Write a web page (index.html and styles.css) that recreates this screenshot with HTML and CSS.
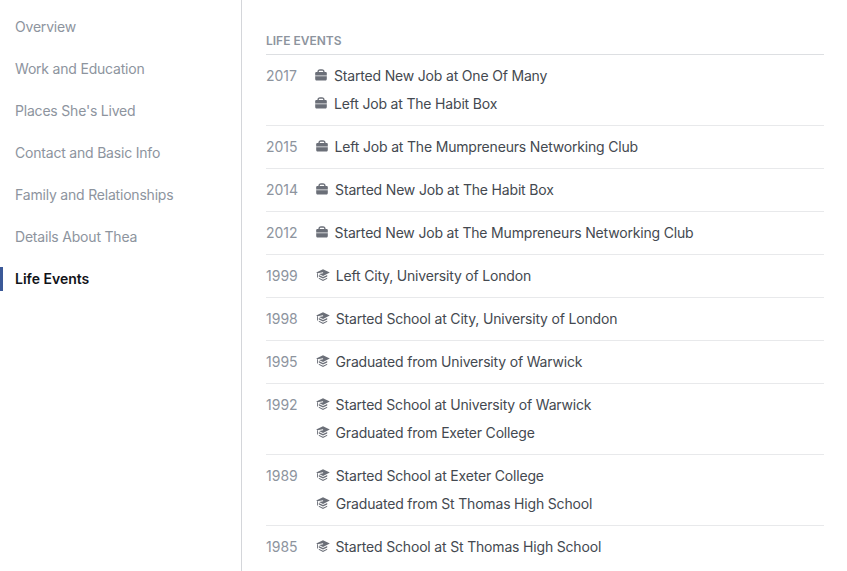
FILE: index.html
```html
<!DOCTYPE html>
<html lang="en">
<head>
<meta charset="utf-8">
<title>Life Events</title>
<link rel="stylesheet" href="styles.css">
</head>
<body>
<svg class="defs" width="0" height="0" aria-hidden="true">
  <symbol id="job" viewBox="0 0 12 12">
    <path d="M2.400 3.500V2.800C2.400 1.200 3.400.3 5 .3h2c1.600 0 2.600.9 2.600 2.500v.7H8.200v-.8c0-.5-.3-.9-1-.9H4.800c-.7 0-1 .4-1 .9v.8z"/>
    <path d="M1.500 3h9c.8 0 1.300.5 1.300 1.300v2H.2v-2C.2 3.500.7 3 1.500 3z"/>
    <path fill-opacity=".55" d="M.2 6.300h11.600v.9H.2z"/>
    <path d="M.2 7.200h11.600v2.900c0 .9-.5 1.500-1.300 1.500h-9c-.8 0-1.300-.6-1.300-1.500z"/>
  </symbol>
  <symbol id="school" viewBox="0 0 14 12">
    <path d="M7 .3 13.800 3.600 7 6.900 3 5 7.200 4.300 7 3.300 1.500 4.200.2 3.600z"/>
    <path d="M2.800 6 7 8.100 11.200 6v1.500L7 9.600 2.800 7.500z"/>
    <path d="M2.800 8.700 7 10.800l4.200-2.100v1.100L7 11.900 2.800 9.800z"/>
    <path d="M1 4.300h.9v4.200H1z"/>
  </symbol>
</svg>
<div class="page">
  <nav class="sidebar">
    <a class="nav-item">Overview</a>
    <a class="nav-item">Work and Education</a>
    <a class="nav-item">Places She's Lived</a>
    <a class="nav-item">Contact and Basic Info</a>
    <a class="nav-item">Family and Relationships</a>
    <a class="nav-item">Details About Thea</a>
    <a class="nav-item active">Life Events</a>
  </nav>
  <main class="content">
    <h2 class="heading">LIFE EVENTS</h2>
    <section class="year-row">
      <div class="year">2017</div>
      <ul class="events">
        <li class="event"><svg class="icon job"><use href="#job"/></svg>Started New Job at One Of Many</li>
        <li class="event"><svg class="icon job"><use href="#job"/></svg>Left Job at The Habit Box</li>
      </ul>
    </section>
    <section class="year-row">
      <div class="year">2015</div>
      <ul class="events">
        <li class="event"><svg class="icon job"><use href="#job"/></svg>Left Job at The Mumpreneurs Networking Club</li>
      </ul>
    </section>
    <section class="year-row">
      <div class="year">2014</div>
      <ul class="events">
        <li class="event"><svg class="icon job"><use href="#job"/></svg>Started New Job at The Habit Box</li>
      </ul>
    </section>
    <section class="year-row">
      <div class="year">2012</div>
      <ul class="events">
        <li class="event"><svg class="icon job"><use href="#job"/></svg>Started New Job at The Mumpreneurs Networking Club</li>
      </ul>
    </section>
    <section class="year-row">
      <div class="year">1999</div>
      <ul class="events">
        <li class="event"><svg class="icon school"><use href="#school"/></svg>Left City, University of London</li>
      </ul>
    </section>
    <section class="year-row">
      <div class="year">1998</div>
      <ul class="events">
        <li class="event"><svg class="icon school"><use href="#school"/></svg>Started School at City, University of London</li>
      </ul>
    </section>
    <section class="year-row">
      <div class="year">1995</div>
      <ul class="events">
        <li class="event"><svg class="icon school"><use href="#school"/></svg>Graduated from University of Warwick</li>
      </ul>
    </section>
    <section class="year-row">
      <div class="year">1992</div>
      <ul class="events">
        <li class="event"><svg class="icon school"><use href="#school"/></svg>Started School at University of Warwick</li>
        <li class="event"><svg class="icon school"><use href="#school"/></svg>Graduated from Exeter College</li>
      </ul>
    </section>
    <section class="year-row">
      <div class="year">1989</div>
      <ul class="events">
        <li class="event"><svg class="icon school"><use href="#school"/></svg>Started School at Exeter College</li>
        <li class="event"><svg class="icon school"><use href="#school"/></svg>Graduated from St Thomas High School</li>
      </ul>
    </section>
    <section class="year-row last">
      <div class="year">1985</div>
      <ul class="events">
        <li class="event"><svg class="icon school"><use href="#school"/></svg>Started School at St Thomas High School</li>
      </ul>
    </section>
  </main>
</div>
</body>
</html>
```
FILE: styles.css
```css
html, body {
  margin: 0;
  height: 100%;
  overflow: hidden;
  background: #fff;
}

body {
  font-family: Inter, "Liberation Sans", sans-serif;
  font-size: 14px;
  color: #444950;
}

.defs {
  display: block;
  height: 0;
}

.page {
  display: flex;
  height: 571px;
}

.sidebar {
  width: 241px;
  flex: none;
  border-right: 1px solid #d4d6da;
  padding-top: 15px;
  display: flex;
  flex-direction: column;
  gap: 18px;
}

.nav-item {
  display: block;
  height: 24px;
  line-height: 24px;
  padding-left: 15px;
  color: #8d949e;
  letter-spacing: -0.2px;
}

.nav-item.active {
  color: #111318;
  font-weight: 600;
  letter-spacing: 0;
  box-shadow: inset 3px 0 0 #3b5998;
}

.content {
  width: 558px;
  flex: none;
  margin-left: 24px;
  padding-top: 32px;
}

.heading {
  margin: 0;
  height: 22px;
  line-height: 18px;
  font-size: 12px;
  font-weight: 600;
  color: #8d949e;
  border-bottom: 1px solid #dddfe2;
}

.year-row {
  display: flex;
  gap: 18px;
  padding: 7px 0;
  border-bottom: 1px solid #e8e9eb;
}

.year-row.last {
  border-bottom: 0;
}

.year {
  line-height: 28px;
  color: #8d949e;
}

.events {
  margin: 0;
  padding: 0;
  list-style: none;
}

.event {
  display: flex;
  align-items: center;
  height: 28px;
  line-height: 28px;
  letter-spacing: -0.18px;
}

.icon {
  flex: none;
  fill: #6b6f78;
  margin-right: 7px;
  margin-top: -3px;
}

.icon.job {
  width: 12px;
  height: 12px;
}

.icon.school {
  width: 14px;
  height: 12px;
  margin-right: 6px;
}
```
